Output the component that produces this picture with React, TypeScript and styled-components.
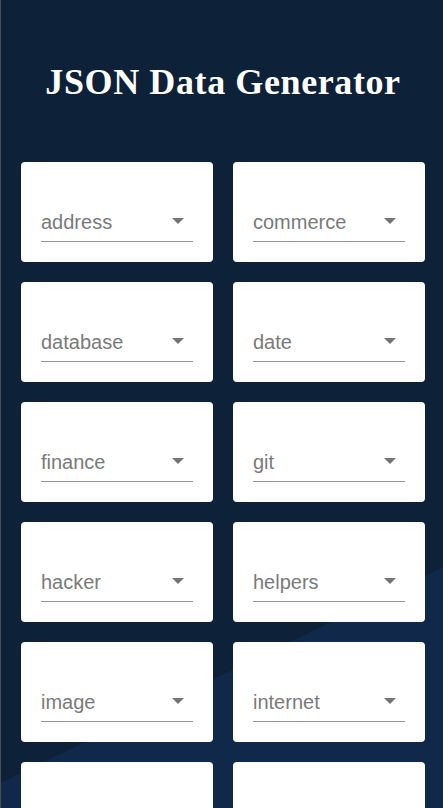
import React from "react";
import styled, { createGlobalStyle } from "styled-components";

const GlobalStyle = createGlobalStyle`
  html, body { margin: 0; padding: 0; }
  body {
    background: #0d2139;
    font-family: "Liberation Sans", Arial, sans-serif;
  }
`;

const Page = styled.div`
  height: 808px;
  box-sizing: border-box;
  border-left: 1px solid #4a4f57;
  background: linear-gradient(
    154deg,
    #0d2139 0%,
    #0d2139 76.5%,
    #10294a 76.5%,
    #10294a 100%
  );
  padding: 0 18px 0 20px;
  overflow: hidden;
`;

const Title = styled.h1`
  margin: 0;
  padding: 62px 0 0;
  height: 100px;
  box-sizing: border-box;
  text-align: center;
  color: #ffffff;
  font-family: "Liberation Serif", "DejaVu Serif", serif;
  font-weight: 700;
  font-size: 36px;
  line-height: 40px;
  letter-spacing: 0.6px;
`;

const Grid = styled.div`
  margin-top: 62px;
  display: grid;
  grid-template-columns: 192px 192px;
  column-gap: 20px;
  row-gap: 20px;
`;

const Card = styled.div`
  background: #ffffff;
  border-radius: 4px;
  height: 100px;
  box-sizing: border-box;
  padding: 0 20px 20px;
  display: flex;
  flex-direction: column;
  justify-content: flex-end;
`;

const Field = styled.div`
  display: flex;
  align-items: center;
  justify-content: space-between;
  height: 30px;
  border-bottom: 1px solid #949494;
  padding-bottom: 4px;
`;

const Value = styled.span`
  color: #7a7a7a;
  font-family: "Liberation Sans", Arial, sans-serif;
  font-size: 20px;
  line-height: 23px;
`;

const Caret = styled.svg`
  width: 12px;
  height: 6px;
  margin-right: 9px;
  margin-bottom: 2px;
  flex: none;
`;

const items = [
  "address",
  "commerce",
  "database",
  "date",
  "finance",
  "git",
  "hacker",
  "helpers",
  "image",
  "internet",
  "lorem",
  "name",
];

export default function App() {
  return (
    <>
      <GlobalStyle />
      <Page>
        <Title>JSON Data Generator</Title>
        <Grid>
          {items.map((it) => (
            <Card key={it}>
              <Field>
                <Value>{it}</Value>
                <Caret viewBox="0 0 12 6">
                  <path d="M0 0 L12 0 L6 6 Z" fill="#757575" />
                </Caret>
              </Field>
            </Card>
          ))}
        </Grid>
      </Page>
    </>
  );
}
